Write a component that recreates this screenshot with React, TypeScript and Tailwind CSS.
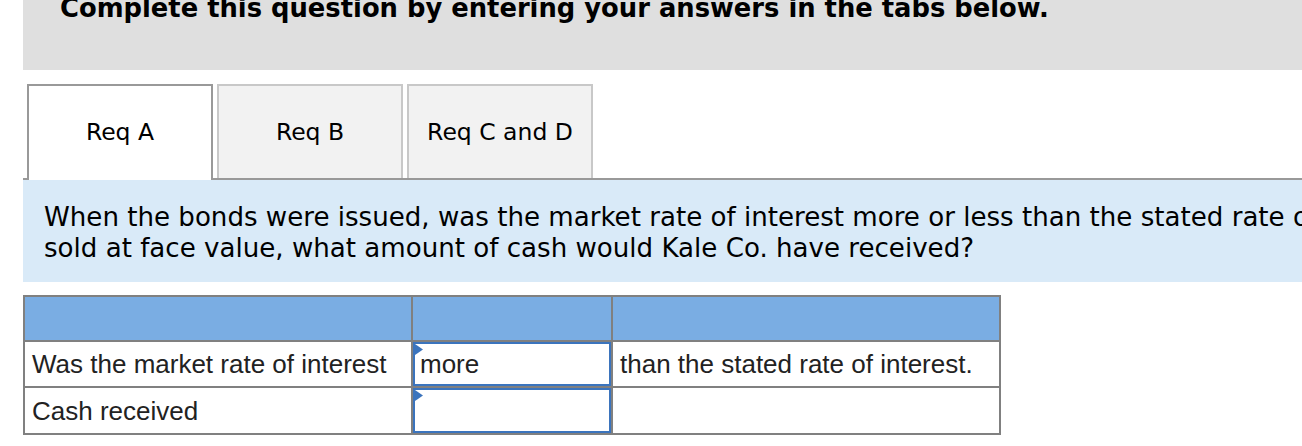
const tabs = [
  { label: "Req A", active: true },
  { label: "Req B", active: false },
  { label: "Req C and D", active: false },
];

function Marker() {
  return (
    <svg className="absolute left-0 top-0" width="9" height="12" viewBox="0 0 9 12">
      <polygon points="0,0 8,5.5 0,11" fill="#3b74bd" />
    </svg>
  );
}

function InputCell({ value }: { value?: string }) {
  return (
    <div className="relative bg-white border-2 border-[#3b74bd] flex items-center pl-[5px] text-[#222]">
      <Marker />
      {value}
    </div>
  );
}

export default function App() {
  return (
    <div className="w-full h-[446px] overflow-hidden bg-white">
      {/* Instruction bar */}
      <div className="ml-[23px] h-[70px] bg-[#dfdfdf] overflow-hidden">
        <div
          className="pl-[37px] -mt-[5px] whitespace-nowrap text-[25.8px] leading-[26px] font-bold text-black"
          style={{ fontFamily: "'DejaVu Sans', Verdana, sans-serif" }}
        >
          Complete this question by entering your answers in the tabs below.
        </div>
      </div>

      {/* Tabs */}
      <div
        className="ml-[23px] mt-[14px] h-[96px] flex items-end gap-[4px] pl-[4px] border-b-2 border-[#999]"
        style={{ fontFamily: "'DejaVu Sans', Verdana, sans-serif" }}
      >
        {tabs.map((t) =>
          t.active ? (
            <div
              key={t.label}
              className="w-[186px] h-[96px] -mb-[2px] bg-white border-2 border-b-0 border-[#999] flex items-center justify-center text-[23.5px] text-black"
            >
              {t.label}
            </div>
          ) : (
            <div
              key={t.label}
              className="w-[186px] h-[94px] bg-[#f2f2f2] border-2 border-b-0 border-[#c8c8c8] flex items-center justify-center text-[23.5px] text-black pt-[2px]"
            >
              {t.label}
            </div>
          )
        )}
      </div>

      {/* Question */}
      <div
        className="ml-[23px] bg-[#d9eaf8] pl-[21px] pt-[22px] pb-[18px] whitespace-nowrap text-[26.1px] leading-[31px] text-black"
        style={{ fontFamily: "'DejaVu Sans', Verdana, sans-serif" }}
      >
        When the bonds were issued, was the market rate of interest more or less than the stated rate of interest? If the bonds had been
        <br />
        sold at face value, what amount of cash would Kale Co. have received?
      </div>

      {/* Answer table */}
      <div
        className="ml-[23px] mt-[13px] w-[978px] grid grid-cols-[386px_198px_386px] grid-rows-[43px_44px_45px] gap-[2px] p-[2px] bg-[#808080] text-[26px] leading-none"
        style={{ fontFamily: "'Liberation Sans', Arial, sans-serif" }}
      >
        <div className="bg-[#7aade3]" />
        <div className="bg-[#7aade3]" />
        <div className="bg-[#7aade3]" />

        <div className="bg-white flex items-center pl-[7px] text-[#222]">Was the market rate of interest</div>
        <InputCell value="more" />
        <div className="bg-white flex items-center pl-[7px] text-[#222]">than the stated rate of interest.</div>

        <div className="bg-white flex items-center pl-[7px] text-[#222]">Cash received</div>
        <InputCell />
        <div className="bg-white" />
      </div>
    </div>
  );
}
